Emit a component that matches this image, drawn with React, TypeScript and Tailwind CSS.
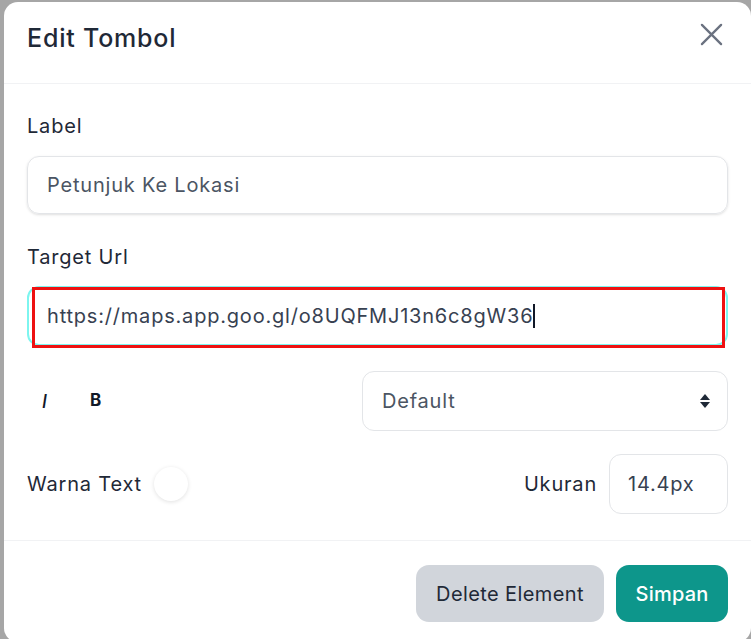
import React from "react";

export default function App() {
  const font = { fontFamily: "Inter, 'Noto Sans', sans-serif" };
  return (
    <div
      className="w-[751px] h-[639px] bg-[#a6a6a6] overflow-hidden pl-[4px] pt-[2px] tracking-[0.8px]"
      style={font}
    >
      <div className="w-[747px] h-[640px] bg-white rounded-[14px] flex flex-col">
        {/* Header */}
        <div className="h-[82px] flex items-center justify-between px-[23px] border-b border-[#f1f2f4]">
          <h1 className="text-[25px] font-medium text-[#1f2937] leading-none -mt-[8px]">
            Edit Tombol
          </h1>
          <button className="w-[26px] h-[26px] flex items-center justify-center mr-[4px] -mt-[16px]">
            <svg width="23" height="23" viewBox="0 0 24 24" fill="none">
              <path
                d="M2 2 L22 22 M22 2 L2 22"
                stroke="#6b7280"
                strokeWidth="2.4"
                strokeLinecap="round"
              />
            </svg>
          </button>
        </div>

        {/* Body */}
        <div className="px-[23px] pt-[28px] pb-[26px] border-b border-[#f1f2f4]">
          <div className="text-[20px] leading-[28px] text-[#1f2937]">Label</div>
          <div className="mt-[16px] h-[58px] rounded-[12px] border border-[#e3e5e8] shadow-sm flex items-center px-[19px] text-[20px] text-[#4b5563]">
            Petunjuk Ke Lokasi
          </div>

          <div className="mt-[29px] text-[20px] leading-[28px] text-[#1f2937]">
            Target Url
          </div>
          <div className="relative mt-[15px] h-[60px] rounded-[12px] border-2 border-[#7df5ef] flex items-center px-[18px] text-[20px] text-[#374151]">
            <span>https://maps.app.goo.gl/o8UQFMJ13n6c8gW36</span>
            <span className="inline-block w-[2px] h-[24px] bg-[#111827]" />
            <div className="absolute left-[3px] -top-[1px] w-[693px] h-[61px] border-[3px] border-[#ee1111]" />
          </div>

          <div className="mt-[25px] flex items-center justify-between">
            <div className="flex items-center pl-[15px]">
              <span className="text-[18px] italic font-medium text-[#111827] w-[48px]">
                I
              </span>
              <span className="text-[17px] font-bold text-[#111827]">B</span>
            </div>
            <div className="w-[366px] h-[60px] rounded-[12px] border border-[#e3e5e8] flex items-center justify-between pl-[19px] pr-[16px] text-[20px] text-[#4b5563]">
              <span>Default</span>
              <svg width="12" height="18" viewBox="0 0 12 18">
                <path d="M6 2 L11 8 L1 8 Z" fill="#1f2937" />
                <path d="M1 10 L11 10 L6 16 Z" fill="#1f2937" />
              </svg>
            </div>
          </div>

          <div className="mt-[23px] flex items-center justify-between">
            <div className="flex items-center">
              <span className="text-[20px] text-[#1f2937]">Warna Text</span>
              <span className="ml-[12px] w-[34px] h-[34px] rounded-full bg-white shadow-[0_1px_4px_rgba(0,0,0,0.12)]" />
            </div>
            <div className="flex items-center">
              <span className="text-[20px] text-[#1f2937] mr-[12px]">Ukuran</span>
              <div className="w-[119px] h-[60px] rounded-[12px] border border-[#e3e5e8] flex items-center pl-[18px] text-[20px] text-[#374151]">
                14.4px
              </div>
            </div>
          </div>
        </div>

        {/* Footer */}
        <div className="px-[23px] pt-[24px] flex justify-end gap-[12px]">
          <button className="w-[188px] h-[57px] rounded-[13px] bg-[#d1d5db] text-[20px] tracking-[0.4px] text-[#1f2937]">
            Delete Element
          </button>
          <button className="w-[112px] h-[57px] rounded-[13px] bg-[#0d968b] text-[20px] tracking-[0.2px] font-medium text-white">
            Simpan
          </button>
        </div>
      </div>
    </div>
  );
}
